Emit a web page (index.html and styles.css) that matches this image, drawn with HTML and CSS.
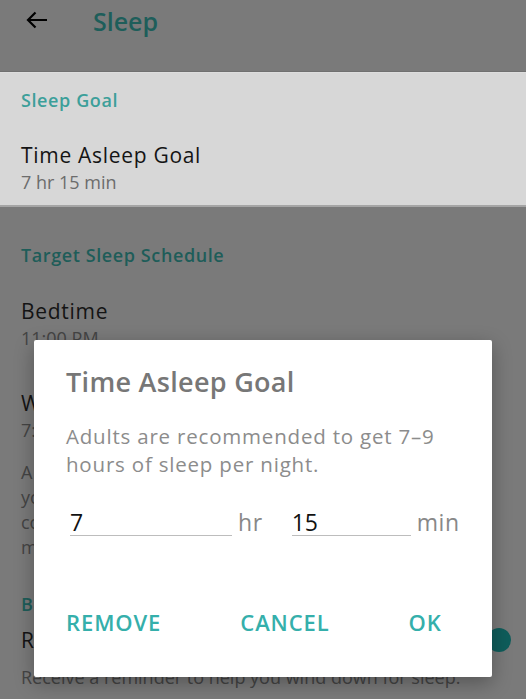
FILE: index.html
```html
<!DOCTYPE html>
<html lang="en">
<head>
    <meta charset="UTF-8">
    <meta name="viewport" content="width=device-width, initial-scale=1.0">
    <title>Sleep</title>
    <link rel="stylesheet" href="styles.css">
</head>
<body>
    <div class="screen">
        <header class="topbar">
            <svg class="back" width="22" height="18" viewBox="0 0 22 18">
                <path d="M21 9H2M9.5 1.5L2 9l7.5 7.5" fill="none" stroke="#000" stroke-width="2.2"/>
            </svg>
            <h1>Sleep</h1>
        </header>

        <section class="goal-band">
            <h2 class="section-title">Sleep Goal</h2>
            <div class="item">
                <div class="item-title">Time Asleep Goal</div>
                <div class="item-sub">7 hr 15 min</div>
            </div>
        </section>

        <section class="section">
            <h2 class="section-title dim">Target Sleep Schedule</h2>
            <div class="item first">
                <div class="item-title">Bedtime</div>
                <div class="item-sub">11:00 PM</div>
            </div>
            <div class="item">
                <div class="item-title">Wake Up Time</div>
                <div class="item-sub">7:00 AM</div>
            </div>
            <p class="note">A regular schedule keeps<br>your body clock in sync and<br>consistent times can help you feel<br>more rested.</p>

            <h2 class="section-title dim reminder-title">Bedtime Reminder</h2>
            <div class="toggle-row">
                <div class="item-title">Reminder</div>
                <div class="toggle"><span class="knob"></span></div>
            </div>
            <div class="item-sub dark">Receive a reminder to help you wind down for sleep.</div>
        </section>

        <div class="dialog">
            <h3 class="dialog-title">Time Asleep Goal</h3>
            <p class="dialog-text">Adults are recommended to get 7–9<br>hours of sleep per night.</p>
            <div class="fields">
                <input class="field hours" type="text" value="7">
                <span class="unit">hr</span>
                <input class="field minutes" type="text" value="15">
                <span class="unit">min</span>
            </div>
            <div class="actions">
                <button>REMOVE</button>
                <button>CANCEL</button>
                <button>OK</button>
            </div>
        </div>
    </div>
</body>
</html>
```

FILE: styles.css
```css
body {
    margin: 0;
    padding: 0;
    font-family: "Open Sans", "Noto Sans", sans-serif;
    background-color: #7a7a7a;
}
.screen {
    position: relative;
    width: 526px;
    height: 699px;
    overflow: hidden;
    background-color: #7a7a7a;
}
.topbar {
    height: 72px;
    box-sizing: border-box;
    display: flex;
    align-items: flex-start;
    padding: 11px 0 0 26px;
    border-bottom: 1px solid #707070;
}
.topbar h1 {
    margin: -7px 0 0 45px;
    font-size: 25px;
    line-height: 34px;
    font-weight: 600;
    color: #1e5e5a;
}
.goal-band {
    height: 135px;
    box-sizing: border-box;
    padding: 15px 21px 0;
    background-color: #d7d7d7;
    border-top: 1px solid #dddddd;
    border-bottom: 2px solid #a5a5a5;
}
.section-title {
    margin: 0;
    font-size: 18px;
    line-height: 24px;
    font-weight: 600;
    letter-spacing: 0.6px;
    color: #3c9f9a;
}
.section-title.dim {
    color: #1e5d59;
}
.item {
    margin-top: 29px;
}
.item-title {
    font-size: 21px;
    line-height: 28px;
    letter-spacing: 0.7px;
    color: #141414;
}
.item-sub {
    font-size: 18px;
    line-height: 26px;
    color: #6c6c6c;
}
.section {
    padding: 36px 21px 0;
}
.section .item-sub {
    color: #444;
}
.item.first {
    margin-top: 30px;
}
.section .item + .item {
    margin-top: 38px;
}
.note {
    margin: 17px 0 0;
    font-size: 18px;
    line-height: 25px;
    color: #444;
}
.reminder-title {
    margin-top: 32px;
}
.toggle-row {
    margin-top: 10px;
    display: flex;
    align-items: center;
    justify-content: space-between;
}
.toggle {
    position: relative;
    width: 34px;
    height: 14px;
    margin-right: -4px;
    border-radius: 7px;
    background-color: #2d6e6b;
}
.knob {
    position: absolute;
    right: -2px;
    top: -5px;
    width: 24px;
    height: 24px;
    border-radius: 50%;
    background-color: #0f5d5b;
}
.item-sub.dark {
    margin-top: 10px;
}

/* dialog */
.dialog {
    position: absolute;
    left: 34px;
    top: 340px;
    width: 458px;
    height: 337px;
    box-sizing: border-box;
    padding: 26px 32px 0;
    background-color: #fff;
    border-radius: 2px;
    box-shadow: 0 6px 20px rgba(0, 0, 0, 0.3);
}
.dialog-title {
    margin: 0;
    font-size: 27px;
    line-height: 32px;
    font-weight: 600;
    letter-spacing: 0.3px;
    color: #777;
}
.dialog-text {
    margin: 24px 0 0;
    font-size: 20.5px;
    line-height: 28px;
    letter-spacing: 0.8px;
    color: #8c8c8c;
}
.fields {
    margin-top: 30px;
    display: flex;
    align-items: flex-end;
    padding-left: 4px;
}
.field {
    height: 27px;
    box-sizing: border-box;
    padding: 0;
    border: none;
    border-bottom: 1px solid #bdbdbd;
    font-family: inherit;
    font-size: 23px;
    line-height: 26px;
    color: #111;
    outline: none;
    background: transparent;
}
.hours {
    width: 162px;
}
.minutes {
    width: 119px;
}
.unit {
    margin-left: 6px;
    font-size: 23px;
    line-height: 28px;
    letter-spacing: 0.6px;
    color: #888;
}
.unit + .field {
    margin-left: 29px;
}
.actions {
    margin-top: 74px;
    display: flex;
    gap: 79px;
}
.actions button {
    padding: 0;
    border: none;
    background: none;
    font-family: inherit;
    font-size: 22px;
    line-height: 24px;
    font-weight: 600;
    letter-spacing: 0.9px;
    color: #35afab;
    cursor: pointer;
}
```
